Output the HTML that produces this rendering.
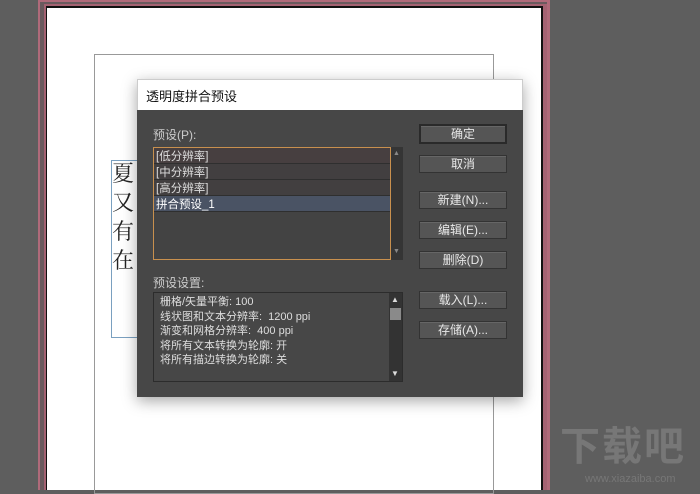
<!DOCTYPE html>
<html><head><meta charset="utf-8"><style>
*{margin:0;padding:0;box-sizing:border-box}
body{width:700px;height:490px;background:#5e5e5e;position:relative;overflow:hidden;font-family:"Liberation Sans","Noto Sans CJK SC",sans-serif;}
.abs{position:absolute}
.btn{position:absolute;left:419px;width:88px;height:18px;background:#555;border:1px solid #333;box-shadow:inset 0 1px 0 #666;color:#e8e8e8;font-size:12px;text-align:center;line-height:16px}
.row{position:absolute;left:0;width:236px;height:16px;border-bottom:1px solid #2f2f2f;color:#ddd;font-size:11.5px;line-height:16px;padding-left:2px;padding-top:1px}
.set{color:#ddd;font-size:11px;line-height:14.5px}
</style></head><body>
<div class="abs" style="left:38px;top:0;width:512px;height:490px;background:#b06a7a"></div>
<div class="abs" style="left:40px;top:2px;width:507px;height:488px;background:#6a5a5e"></div>
<div class="abs" style="left:44px;top:4px;width:503px;height:486px;background:#a46272"></div>
<div class="abs" style="left:46px;top:6px;width:497px;height:484px;background:#111"></div>
<div class="abs" style="left:47px;top:8px;width:494px;height:482px;background:#fff"></div>
<div class="abs" style="left:94px;top:54px;width:400px;height:440px;border:1px solid #999"></div>
<div class="abs" style="left:111px;top:160px;width:30px;height:178px;border:1px solid #7aa0c0;border-right:none"></div>
<div class="abs" style="left:112px;top:158px;width:26px;font-family:'Noto Serif CJK SC',serif;font-size:22px;line-height:29px;color:#222">夏<br>又<br>有<br>在</div>
<div class="abs" style="left:137px;top:79px;width:386px;height:318px;box-shadow:0 4px 14px rgba(0,0,0,.35)"></div>
<div class="abs" style="left:137px;top:79px;width:386px;height:31px;background:#fff;border:1px solid #ccc;border-bottom:none"></div>
<div class="abs" style="left:146px;top:86px;font-size:13px;color:#111">透明度拼合预设</div>
<div class="abs" style="left:137px;top:110px;width:386px;height:287px;background:#474747"></div>
<div class="abs" style="left:153px;top:126px;font-size:12px;color:#ccc">预设(P):</div>
<div class="abs" style="left:153px;top:147px;width:238px;height:113px;border:1px solid #c8904e;background:#434343;overflow:hidden">
 <div class="row" style="top:0;background:#473f40">[低分辨率]</div>
 <div class="row" style="top:16px;background:#423f40">[中分辨率]</div>
 <div class="row" style="top:32px;background:#423f40">[高分辨率]</div>
 <div class="row" style="top:48px;background:#4a5364;color:#fff">拼合预设_1</div>
</div>
<div class="abs" style="left:391px;top:147px;width:12px;height:113px;background:#353535"></div>
<div class="abs" style="left:393px;top:150px;color:#888;font-size:7px">▲</div>
<div class="abs" style="left:393px;top:248px;color:#888;font-size:7px">▼</div>
<div class="abs" style="left:153px;top:274px;font-size:12px;color:#ccc">预设设置:</div>
<div class="abs" style="left:153px;top:292px;width:250px;height:90px;border:1px solid #2c2c2c;background:#474747"></div>
<div class="abs set" style="left:160px;top:295px">栅格/矢量平衡: 100<br>线状图和文本分辨率:&nbsp; 1200 ppi<br>渐变和网格分辨率:&nbsp; 400 ppi<br>将所有文本转换为轮廓: 开<br>将所有描边转换为轮廓: 关</div>
<div class="abs" style="left:389px;top:293px;width:13px;height:88px;background:#333"></div>
<div class="abs" style="left:390px;top:308px;width:11px;height:12px;background:#8a8a8a"></div>
<div class="abs" style="left:391px;top:295px;color:#ddd;font-size:8px">▲</div>
<div class="abs" style="left:391px;top:369px;color:#ddd;font-size:8px">▼</div>
<div class="btn" style="top:124px;height:20px;border:2px solid #2a2a2a;line-height:16px">确定</div>
<div class="btn" style="top:155px">取消</div>
<div class="btn" style="top:191px">新建(N)...</div>
<div class="btn" style="top:221px">编辑(E)...</div>
<div class="btn" style="top:251px">删除(D)</div>
<div class="btn" style="top:291px">载入(L)...</div>
<div class="btn" style="top:321px">存储(A)...</div>
<div class="abs" style="left:560px;top:425px;font-size:40px;font-weight:bold;color:#777;letter-spacing:2px;line-height:44px">下载吧</div>
<div class="abs" style="left:585px;top:473px;font-size:11px;color:#777">www.xiazaiba.com</div>
</body></html>
